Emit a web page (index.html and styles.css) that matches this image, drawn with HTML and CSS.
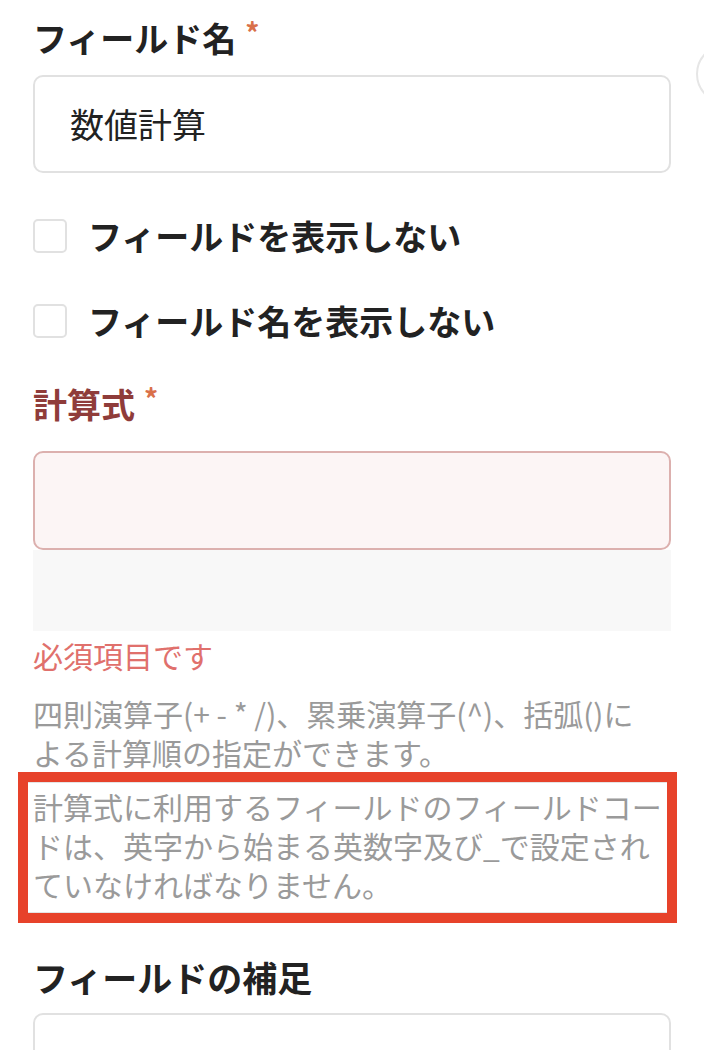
FILE: index.html
```html
<!DOCTYPE html>
<html lang="ja">
<head>
<meta charset="utf-8">
<link rel="stylesheet" href="styles.css">
</head>
<body>
<div class="page">
  <div class="side-btn"></div>
  <div class="label label-first">フィールド名<span class="req">*</span></div>
  <div class="input input-name">数値計算</div>

  <div class="check-row check-first"><span class="box"></span><span class="check-text">フィールドを表示しない</span></div>
  <div class="check-row check-second"><span class="box"></span><span class="check-text">フィールド名を表示しない</span></div>

  <div class="label label-error">計算式<span class="req">*</span></div>
  <div class="input input-invalid"></div>
  <div class="editor-pad"></div>
  <div class="error-msg">必須項目です</div>
  <p class="help">四則演算子(+ - * /)、累乗演算子(^)、括弧()に<br>よる計算順の指定ができます。</p>
  <div class="highlight">
    <p class="help help-inner">計算式に利用するフィールドのフィールドコードは、英字から始まる英数字及び_で設定されていなければなりません。</p>
  </div>

  <div class="label label-note">フィールドの補足</div>
  <div class="input input-note"></div>
</div>
</body>
</html>
```

FILE: styles.css
```css
html, body {
  margin: 0;
  padding: 0;
  background: #ffffff;
}
body {
  font-family: "Noto Sans CJK JP", "Noto Sans", sans-serif;
  color: #222222;
  overflow: hidden;
  height: 1050px;
}
.page {
  position: relative;
  width: 638px;
  padding-left: 33px;
  padding-top: 16px;
}
.side-btn {
  position: absolute;
  left: 696px;
  top: 44px;
  width: 56px;
  height: 56px;
  border: 2px solid #e6e6e6;
  border-radius: 50%;
}
.label {
  font-size: 34px;
  font-weight: 700;
  line-height: 44px;
  height: 44px;
  white-space: nowrap;
}
.req {
  display: inline-block;
  margin-left: 9px;
  font-size: 28px;
  font-weight: 700;
  line-height: 28px;
  vertical-align: top;
  margin-top: 2px;
  color: #d9704a;
}
.input {
  box-sizing: border-box;
  width: 638px;
  height: 98px;
  border: 2px solid #e1e1e1;
  border-radius: 10px;
  background: #ffffff;
}
.input-name {
  margin-top: 15px;
  padding-left: 35px;
  font-size: 34px;
  line-height: 94px;
  color: #222222;
}
.check-row {
  display: flex;
  align-items: center;
  height: 34px;
}
.check-first {
  margin-top: 46px;
}
.check-second {
  margin-top: 51px;
}
.box {
  box-sizing: border-box;
  width: 34px;
  height: 34px;
  border: 2px solid #e1e1e1;
  border-radius: 5px;
  flex: none;
}
.check-text {
  margin-left: 21px;
  font-size: 34px;
  font-weight: 700;
  line-height: 44px;
  white-space: nowrap;
}
.label-error {
  margin-top: 44px;
  color: #8f3c3a;
}
.input-invalid {
  margin-top: 25px;
  height: 99px;
  border-color: #dcb0ae;
  background: #fcf5f5;
}
.editor-pad {
  width: 638px;
  height: 81px;
  background: #f8f8f8;
}
.error-msg {
  margin-top: 5px;
  font-size: 30px;
  line-height: 39px;
  color: #e0706c;
}
.help {
  margin: 19px 0 0 0;
  font-size: 30px;
  line-height: 39px;
  color: #9a9a9a;
}
.highlight {
  margin: 0 0 0 -15px;
  width: 639px;
  border: 10px solid #e7422a;
}
.help-inner {
  margin: 0;
  padding: 4px 0 8px 5px;
  border-top: 1px solid #e4e4e4;
  border-bottom: 1px solid #e4e4e4;
}
.label-note {
  margin-top: 32px;
  font-size: 35px;
}
.input-note {
  margin-top: 14px;
  height: 98px;
}
```
